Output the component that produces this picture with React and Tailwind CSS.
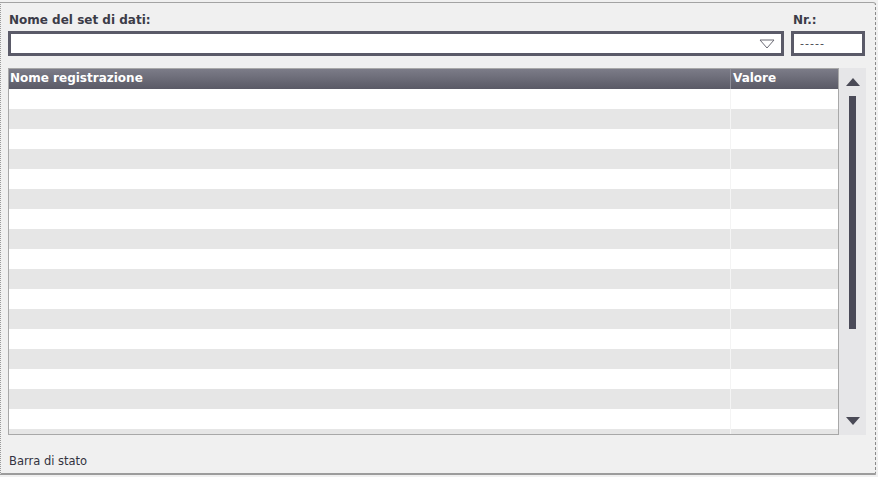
import React from "react";

const ROWS = Array.from({ length: 18 });

const font = { fontFamily: '"DejaVu Sans", Verdana, sans-serif' };

const App = () => {
  return (
    <div
      className="w-[878px] h-[477px] bg-[#f0f0f0] pt-[2px] overflow-hidden"
      style={font}
    >
      <div className="h-[473px] w-[876px] border-t border-[#a3a3a3] border-l border-l-[#9a9a9a] [border-left-style:dotted] border-r border-r-[#8a8a8a] [border-right-style:dashed] border-b-2 border-b-[#9c9c9c] rounded-tr-[3px] flex flex-col pl-[7px] pt-[8px]">
        {/* top: dataset selector + number */}
        <div className="flex items-end">
          <div className="flex flex-col w-[776px]">
            <span className="text-[12px] font-bold leading-[18px] text-[#3c3c48] pl-[1px]">
              Nome del set di dati:
            </span>
            <div className="mt-[2px] h-[25px] border-[3px] border-[#5a5a68] bg-white flex items-center justify-end pr-[6px]">
              <svg width="16" height="10" viewBox="0 0 16 10">
                <polygon
                  points="1,1 15,1 8,9"
                  fill="none"
                  stroke="#6a6a74"
                  strokeWidth="1"
                />
              </svg>
            </div>
          </div>
          <div className="flex flex-col w-[74px] ml-[7px]">
            <span className="text-[12px] font-bold leading-[18px] text-[#3c3c48] pl-[2px]">
              Nr.:
            </span>
            <div className="mt-[2px] h-[25px] border-[3px] border-[#5a5a68] bg-white flex items-center pl-[6px] text-[11px] tracking-[1px] text-[#444450] leading-none">
              -----
            </div>
          </div>
        </div>

        {/* table with scrollbar */}
        <div className="flex mt-[12px] h-[367px]">
          <div className="w-[831px] border border-[#a8a8a8] bg-white flex flex-col overflow-hidden">
            <div className="flex h-[20px] shrink-0 bg-gradient-to-b from-[#7c7c88] to-[#5a5a66] text-white text-[12px] font-bold leading-[19px]">
              <div className="w-[722px] pl-[1px] border-r border-[#8e8e98]">
                Nome registrazione
              </div>
              <div className="flex-1 pl-[2px]">Valore</div>
            </div>
            {ROWS.map((_, i) => (
              <div
                key={i}
                className={`flex h-[20px] shrink-0 ${
                  i % 2 === 1 ? "bg-[#e6e6e6]" : "bg-white"
                }`}
              >
                <div className="w-[722px] border-r border-[#f4f4f4]" />
                <div className="flex-1" />
              </div>
            ))}
          </div>
          <div className="w-[27px] bg-[#e6e6e8] flex flex-col items-center py-[10px]">
            <svg width="14" height="8" viewBox="0 0 14 8">
              <polygon points="0,8 14,8 7,0" fill="#4a4a56" />
            </svg>
            <div className="w-[7px] h-[233px] mt-[10px] bg-[#4a4a58]" />
            <div className="flex-1" />
            <svg width="14" height="8" viewBox="0 0 14 8">
              <polygon points="0,0 14,0 7,8" fill="#4a4a56" />
            </svg>
          </div>
        </div>

        {/* status bar */}
        <div className="mt-[18px] pl-[1px] text-[11.5px] leading-[16px] text-[#333340]">
          Barra di stato
        </div>
      </div>
    </div>
  );
};

export default App;
